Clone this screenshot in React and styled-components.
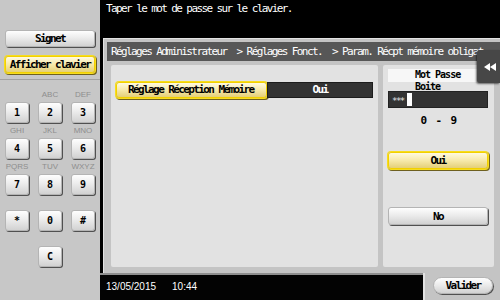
import React from 'react';
import styled, { createGlobalStyle, css } from 'styled-components';

const Global = createGlobalStyle`
  html, body { margin: 0; padding: 0; background: #000; }
  body { width: 500px; height: 300px; overflow: hidden; }
  * { box-sizing: border-box; }
`;

const mono = `"DejaVu Sans Mono", "Liberation Mono", monospace`;
const sans = `"Liberation Sans", Arial, sans-serif`;

const uiText = css`
  font-family: ${mono};
  font-size: 11px;
  letter-spacing: -1.6px;
`;

const grayFace = css`
  background: linear-gradient(#fefefe, #ececec 45%, #d2d2d2);
  border: 1px solid #b4b4b4;
  box-shadow: 1px 1px 0 #505050;
  border-radius: 3px;
  color: #000;
`;

const yellowFace = css`
  background: linear-gradient(#fffae0, #f6e9aa 50%, #e4cf78);
  border: 1px solid #f2d000;
  box-shadow: 0 0 0 1px #f6dc20, 1px 1px 0 1px #6e6020;
  border-radius: 3px;
  color: #000;
`;

const Screen = styled.div`
  width: 500px;
  height: 300px;
  display: flex;
  ${uiText}
`;

const LeftColumn = styled.aside`
  width: 100px;
  background: #c7c7c7;
  display: flex;
  flex-direction: column;
`;

const TopSection = styled.div`
  height: 80px;
  padding: 30px 5px 0;
  border-bottom: 1px solid #a2a2a2;
  display: flex;
  flex-direction: column;
  gap: 9px;
`;

const SideButton = styled.button`
  height: 17px;
  width: 90px;
  padding: 0;
  ${uiText}
  font-weight: bold;
  ${(p) => (p.$active ? yellowFace : grayFace)}
`;

const Keypad = styled.div`
  display: grid;
  grid-template-columns: repeat(3, 24px);
  column-gap: 9px;
  row-gap: 2px;
  padding: 9px 0 0 5px;
`;

const KeyCell = styled.div`
  display: flex;
  flex-direction: column;
  align-items: center;
  grid-column: ${(p) => p.$col || 'auto'};
`;

const KeyLetters = styled.span`
  height: 13px;
  line-height: 12px;
  font-family: ${sans};
  font-size: 8px;
  letter-spacing: 0;
  color: #8e8e8e;
`;

const Key = styled.button`
  width: 24px;
  height: 21px;
  padding: 0;
  font-family: ${mono};
  font-size: 10px;
  font-weight: bold;
  letter-spacing: 0;
  ${grayFace}
`;

const Main = styled.div`
  flex: 1;
  display: flex;
  flex-direction: column;
  background: #000;
`;

const Header = styled.header`
  height: 38px;
  padding: 4px 0 0 6px;
  line-height: 10px;
  color: #fff;
`;

const Frame = styled.section`
  flex: 1;
  margin-left: 3px;
  background: #c4c4c4;
  border-top: 1px solid #e2e2e2;
  border-left: 1px solid #e2e2e2;
  padding: 3px 0 6px 3px;
  position: relative;
  display: flex;
  flex-direction: column;
`;

const Breadcrumb = styled.nav`
  height: 19px;
  background: #575757;
  color: #fff;
  line-height: 19px;
  padding-left: 4px;
  white-space: pre;
  overflow: hidden;
`;

const Panels = styled.div`
  flex: 1;
  display: flex;
  gap: 5px;
  margin-top: 4px;
  padding: 0 6px 0 4px;
`;

const Panel = styled.div`
  width: ${(p) => p.$w}px;
  background: #e2e2e2;
  border-radius: 2px;
  padding: ${(p) => p.$pad};
  display: flex;
  flex-direction: column;
`;

const SettingRow = styled.div`
  display: flex;
  height: 16px;
`;

const SettingName = styled.div`
  width: 151px;
  height: 16px;
  line-height: 14px;
  padding-left: 11px;
  font-weight: bold;
  ${yellowFace}
`;

const SettingValue = styled.div`
  width: 106px;
  height: 16px;
  background: #333;
  border: 1px solid #1c1c1c;
  color: #fff;
  text-align: center;
  line-height: 14px;
  font-weight: bold;
`;

const FieldLabel = styled.div`
  height: 13px;
  background: #f7f7f7;
  padding: 0 0 0 27px;
  font-size: 10px;
  letter-spacing: -1px;
  line-height: 12px;
  font-weight: bold;
  color: #000;
`;

const PasswordField = styled.div`
  margin-top: 9px;
  height: 17px;
  background: #333;
  border: 1px solid #222;
  display: flex;
  align-items: center;
  padding-left: 3px;
  color: #fff;
`;

const Masked = styled.span`
  font-family: ${mono};
  font-size: 9px;
  letter-spacing: -1.5px;
  color: #e6e6e6;
  line-height: 10px;
  padding-top: 2px;
`;

const Cursor = styled.span`
  width: 5px;
  height: 13px;
  background: #fff;
  margin-left: 3px;
`;

const Range = styled.div`
  margin-top: 8px;
  height: 10px;
  line-height: 10px;
  text-align: center;
  white-space: pre;
  font-weight: bold;
  color: #000;
`;

const ChoiceButton = styled.button`
  width: 100px;
  height: ${(p) => p.$h}px;
  margin-top: ${(p) => p.$mt}px;
  padding: 0;
  ${uiText}
  font-weight: bold;
  ${(p) => (p.$active ? yellowFace : grayFace)}
`;

const CollapseTab = styled.div`
  position: absolute;
  right: 0;
  top: 11px;
  width: 23px;
  height: 33px;
  background: #474747;
  border-radius: 3px 0 0 3px;
  box-shadow: -1px 1px 2px rgba(0, 0, 0, 0.55);
  display: flex;
  align-items: center;
  justify-content: center;
  padding-left: 2px;
`;

const Footer = styled.footer`
  height: 27px;
  display: flex;
`;

const StatusBar = styled.div`
  flex: 1;
  background: #030303;
  border-top: 2px solid #8e8e8e;
  color: #fff;
  font-family: ${sans};
  font-size: 10px;
  letter-spacing: 0;
  display: flex;
  align-items: center;
  padding: 0 0 2px 6px;
  gap: 16px;
`;

const ValidTab = styled.div`
  width: 77px;
  background: #c4c4c4;
  border-left: 2px solid #e2e2e2;
  padding: 4px 0 0 8px;
`;

const ValidButton = styled.button`
  width: 60px;
  height: 17px;
  padding: 0;
  ${uiText}
  font-weight: bold;
  ${grayFace}
  border-radius: 9px;
`;

const keys = [
  { k: '1', l: '' },
  { k: '2', l: 'ABC' },
  { k: '3', l: 'DEF' },
  { k: '4', l: 'GHI' },
  { k: '5', l: 'JKL' },
  { k: '6', l: 'MNO' },
  { k: '7', l: 'PQRS' },
  { k: '8', l: 'TUV' },
  { k: '9', l: 'WXYZ' },
  { k: '*', l: '' },
  { k: '0', l: '' },
  { k: '#', l: '' },
  { k: 'C', l: '', col: 2 },
];

export default function App() {
  return (
    <>
      <Global />
      <Screen>
        <LeftColumn>
          <TopSection>
            <SideButton>Signet</SideButton>
            <SideButton $active>Afficher clavier</SideButton>
          </TopSection>
          <Keypad>
            {keys.map((item) => (
              <KeyCell key={item.k} $col={item.col}>
                <KeyLetters>{item.l}</KeyLetters>
                <Key>{item.k}</Key>
              </KeyCell>
            ))}
          </Keypad>
        </LeftColumn>
        <Main>
          <Header>Taper le mot de passe sur le clavier.</Header>
          <Frame>
            <Breadcrumb>{'Réglages Administrateur  > Réglages Fonct.  > Param. Récpt mémoire obligat.'}</Breadcrumb>
            <Panels>
              <Panel $w={267} $pad="17px 0 0 5px">
                <SettingRow>
                  <SettingName>Réglage Réception Mémoire</SettingName>
                  <SettingValue>Oui</SettingValue>
                </SettingRow>
              </Panel>
              <Panel $w={111} $pad="4px 6px 0 5px">
                <FieldLabel>
                  Mot Passe
                  <br />
                  Boite
                </FieldLabel>
                <PasswordField>
                  <Masked>***</Masked>
                  <Cursor />
                </PasswordField>
                <Range>{'0  -  9'}</Range>
                <ChoiceButton $active $h={17} $mt={26}>Oui</ChoiceButton>
                <ChoiceButton $h={18} $mt={38}>No</ChoiceButton>
              </Panel>
            </Panels>
            <CollapseTab>
              <svg width="12" height="8" viewBox="0 0 12 8">
                <path d="M0 4 L6 0 L6 8 Z M6 4 L12 0 L12 8 Z" fill="#fff" />
              </svg>
            </CollapseTab>
          </Frame>
          <Footer>
            <StatusBar>
              <span>13/05/2015</span>
              <span>10:44</span>
            </StatusBar>
            <ValidTab>
              <ValidButton>Valider</ValidButton>
            </ValidTab>
          </Footer>
        </Main>
      </Screen>
    </>
  );
}
